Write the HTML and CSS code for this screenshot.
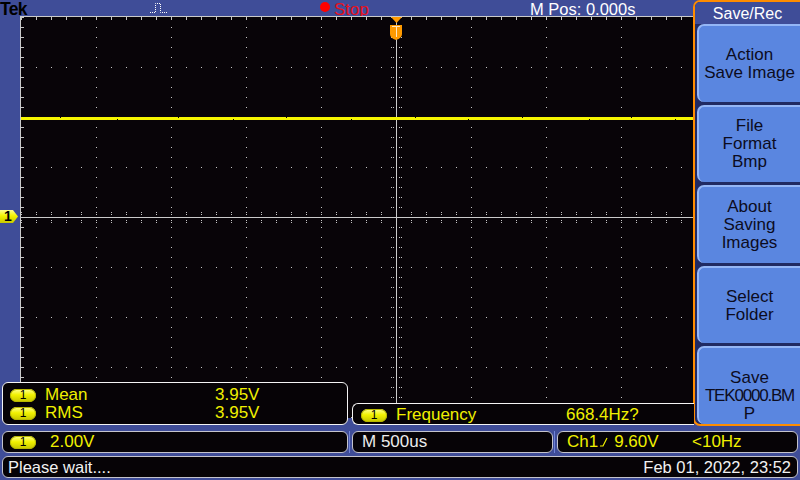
FILE: index.html
```html
<!DOCTYPE html>
<html>
<head>
<meta charset="utf-8">
<title>Tek Save/Rec</title>
<link rel="stylesheet" href="styles.css">
</head>
<body>
<div class="screen">
  <div class="main">
    <div class="topbar">
      <span class="tek">Tek</span>
      <svg class="pulse" width="19" height="11" viewBox="0 0 19 11">
        <polyline points="0,9.5 5.5,9.5 5.5,0.5 10.5,0.5 10.5,9.5 18,9.5" fill="none" stroke="#ffffff" stroke-width="1" stroke-dasharray="1 1"/>
      </svg>
      <span class="stop-dot"></span>
      <span class="stop">Stop</span>
      <span class="mpos">M Pos: 0.000s</span>
    </div>
    <div class="scope">
      <div class="layer wave">
        <div class="gutter"><div class="ch-marker">1</div></div>
        <svg class="graticule" width="673" height="402" viewBox="0 0 673 402">
          <defs>
            <pattern id="vd" x="1" y="1" width="75" height="10" patternUnits="userSpaceOnUse"><rect width="1" height="1" fill="#c4c4c4"/></pattern>
            <pattern id="hd" x="1" y="1" width="15" height="50" patternUnits="userSpaceOnUse"><rect width="1" height="1" fill="#c4c4c4"/></pattern>
            <pattern id="tt" x="1" y="1" width="15" height="400" patternUnits="userSpaceOnUse"><rect width="1" height="3" fill="#c4c4c4"/></pattern>
            <pattern id="lt" x="1" y="1" width="400" height="10" patternUnits="userSpaceOnUse"><rect width="3" height="1" fill="#c4c4c4"/></pattern>
          </defs>
          <rect width="673" height="402" fill="#080408"/>
          <rect x="1" y="1" width="672" height="401" fill="url(#vd)"/>
          <rect x="1" y="1" width="672" height="401" fill="url(#hd)"/>
          <rect x="1" y="1" width="672" height="3" fill="url(#tt)"/>
          <rect x="1" y="1" width="3" height="401" fill="url(#lt)"/>
          <g stroke="#c4c4c4" stroke-width="1">
            <line x1="371.5" y1="1" x2="371.5" y2="401" stroke-dasharray="1 9"/>
            <line x1="373.5" y1="1" x2="373.5" y2="401" stroke-dasharray="1 9"/>
            <line x1="379.5" y1="1" x2="379.5" y2="401" stroke-dasharray="1 9"/>
            <line x1="381.5" y1="1" x2="381.5" y2="401" stroke-dasharray="1 9"/>
            <line x1="1" y1="196.5" x2="673" y2="196.5" stroke-dasharray="1 14"/>
            <line x1="1" y1="198.5" x2="673" y2="198.5" stroke-dasharray="1 14"/>
            <line x1="1" y1="204.5" x2="673" y2="204.5" stroke-dasharray="1 14"/>
            <line x1="1" y1="206.5" x2="673" y2="206.5" stroke-dasharray="1 14"/>
          </g>
          <g stroke="#cacaca" stroke-width="1">
            <line x1="376.5" y1="1" x2="376.5" y2="402"/>
            <line x1="1" y1="201.5" x2="673" y2="201.5"/>
            <line x1="0.5" y1="0" x2="0.5" y2="402"/>
            <line x1="0" y1="0.5" x2="673" y2="0.5"/>
          </g>
          <rect x="1" y="101" width="672" height="3" fill="#f6f600"/>
          <g fill="#080408">
            <rect x="40" y="101" width="1" height="1"/><rect x="97" y="103" width="1" height="1"/>
            <rect x="158" y="101" width="1" height="1"/><rect x="213" y="103" width="1" height="1"/>
            <rect x="266" y="101" width="1" height="1"/><rect x="331" y="103" width="1" height="1"/>
            <rect x="395" y="101" width="1" height="1"/><rect x="448" y="103" width="1" height="1"/>
            <rect x="502" y="101" width="1" height="1"/><rect x="569" y="103" width="1" height="1"/>
            <rect x="611" y="101" width="1" height="1"/><rect x="655" y="103" width="1" height="1"/>
          </g>
          <polygon points="371,1 382,1 376.5,7" fill="#ff9a00"/>
          <path d="M370,9 H382 V18 Q382,22 376,24 Q370,22 370,18 Z" fill="#ff9a00"/>
          <path d="M372,10.5 H380 M376.5,10.5 V21" stroke="#ffe6c0" stroke-width="1" fill="none"/>
        </svg>
      </div>
      <div class="layer readouts">
        <div class="box meas">
          <div class="row"><span class="badge">1</span><span class="label">Mean</span><span class="value">3.95V</span></div>
          <div class="row"><span class="badge">1</span><span class="label">RMS</span><span class="value">3.95V</span></div>
        </div>
        <div class="box freq">
          <span class="badge">1</span><span class="label">Frequency</span><span class="value">668.4Hz?</span>
        </div>
      </div>
    </div>
  </div>

  <div class="menu">
    <div class="menu-title">Save/Rec</div>
    <div class="menu-btn"><span class="btn-label">Action<br>Save Image</span></div>
    <div class="menu-btn"><span class="btn-label">File<br>Format<br>Bmp</span></div>
    <div class="menu-btn"><span class="btn-label">About<br>Saving<br>Images</span></div>
    <div class="menu-btn"><span class="btn-label">Select<br>Folder</span></div>
    <div class="menu-btn low"><span class="btn-label">Save<br><span class="fname">TEK0000.BM</span><br>P</span></div>
  </div>

  <div class="status-row">
    <div class="box vscale"><span class="badge">1</span><span class="yel">2.00V</span></div>
    <div class="joint"></div>
    <div class="box timebase">M 500us</div>
    <div class="joint"></div>
    <div class="box trig">
      <span class="trig-main">Ch1<svg class="slope" width="8" height="10" viewBox="0 0 8 10"><polyline points="0,9 3,9 7,1" fill="none" stroke="#f0f000" stroke-width="1.2"/></svg>9.60V</span>
      <span>&lt;10Hz</span>
    </div>
  </div>

  <div class="box msg-row">
    <span>Please wait....</span>
    <span>Feb 01, 2022, 23:52</span>
  </div>
</div>
</body>
</html>
```

FILE: styles.css
```css
* { box-sizing: border-box; }

html, body {
  margin: 0;
  padding: 0;
  background: #3f4d98;
}

body {
  font-family: "Liberation Sans", Arial, sans-serif;
  width: 800px;
  height: 480px;
  overflow: hidden;
}

.screen {
  width: 800px;
  height: 480px;
  display: grid;
  grid-template-columns: 693px 107px;
  grid-template-rows: 426px auto auto;
}

/* ---------- main scope column ---------- */
.main {
  display: flex;
  flex-direction: column;
  min-width: 0;
}

.topbar {
  height: 16px;
  display: flex;
  align-items: flex-start;
  font-size: 16.5px;
  line-height: 13px;
  padding-top: 3px;
  white-space: nowrap;
}

.tek {
  width: 150px;
  flex: none;
  font-weight: bold;
  color: #000;
  font-size: 17.5px;
  letter-spacing: -0.7px;
}

.pulse {
  flex: none;
  margin-top: 0;
  display: block;
}

.stop-dot {
  flex: none;
  width: 10px;
  height: 10px;
  margin-left: 151px;
  margin-top: -1px;
  border-radius: 50%;
  background: #ff0000;
}

.stop {
  margin-left: 4px;
  color: #e8101c;
  font-size: 17px;
}

.mpos {
  margin-left: auto;
  width: 163px;
  color: #ffffff;
}

.scope {
  flex: 1;
  display: grid;
  z-index: 1;
}

.layer {
  grid-area: 1 / 1;
}

.wave {
  display: flex;
  align-items: flex-start;
}

.gutter {
  width: 20px;
  flex: none;
  padding-top: 194px;
}

.ch-marker {
  width: 18px;
  height: 13px;
  clip-path: polygon(0 0, 72% 0, 100% 50%, 72% 100%, 0 100%);
  background: linear-gradient(#ffff90, #f4f400 45%, #c8c800);
  color: #000;
  font-weight: bold;
  font-size: 14px;
  line-height: 13px;
  padding-left: 4px;
}

.graticule {
  display: block;
  flex: none;
}

.readouts {
  align-self: end;
  display: flex;
  align-items: flex-end;
  padding-bottom: 1px;
}

/* ---------- readout boxes ---------- */
.box {
  background: #060306;
  border: 1px solid #c4c4cc;
  border-radius: 6px;
  color: #f0f000;
  font-size: 17px;
  line-height: 18px;
  white-space: nowrap;
}

.badge {
  flex: none;
  width: 26px;
  height: 13px;
  border-radius: 7px;
  background: linear-gradient(#ffff9a, #f2f200 45%, #c4c400);
  box-shadow: inset 0 0 0 1px #b8b800;
  color: #000;
  font-size: 12px;
  line-height: 13px;
  text-align: center;
}

.label {
  width: 170px;
  flex: none;
}

.meas {
  margin-left: 2px;
  width: 346px;
  height: 43px;
  border-color: #f4f4f4;
  padding: 3px 0 0 7px;
}

.row {
  display: flex;
  align-items: center;
  height: 18px;
}

.row .badge {
  margin-right: 9px;
}

.freq {
  margin-left: 4px;
  width: 342px;
  height: 22px;
  border-color: #f4f4f4;
  border-right: none;
  border-radius: 6px 0 0 6px;
  display: flex;
  align-items: center;
  padding: 2px 0 0 8px;
}

.freq .badge {
  margin-right: 9px;
}

/* ---------- side menu ---------- */
.menu {
  grid-column: 2;
  grid-row: 1;
  display: flex;
  flex-direction: column;
  gap: 3px;
  border: 2px solid #ff8c00;
  border-right: none;
  border-radius: 7px 0 0 7px;
  background: #202a62;
  padding-left: 2px;
  overflow: hidden;
}

.menu-title {
  flex: none;
  height: 22px;
  margin-left: -2px;
  margin-bottom: -3px;
  background: #3f4d98;
  color: #ffffff;
  font-size: 16px;
  line-height: 21px;
  padding-top: 1px;
  text-align: center;
}

.menu-btn {
  flex: 1 1 0;
  min-height: 0;
  display: flex;
  align-items: center;
  justify-content: center;
  text-align: center;
  background: #5a86e0;
  border-top: 2px solid #94b6f6;
  border-left: 2px solid #94b6f6;
  border-radius: 7px 0 0 7px;
  color: #0c0c1e;
  font-size: 17px;
  line-height: 18px;
}

.btn-label {
  display: block;
}

.menu-btn.low .btn-label {
  margin-top: 20px;
}

.fname {
  letter-spacing: -1.2px;
}

/* ---------- bottom rows ---------- */
.status-row {
  grid-column: 1 / -1;
  display: flex;
  margin-top: 5px;
  height: 22px;
}

.status-row .box {
  height: 22px;
  display: flex;
  align-items: center;
}

.joint {
  width: 4px;
  flex: none;
  background: linear-gradient(90deg, transparent 1px, #6e82d8 1px, #6e82d8 2px, transparent 2px);
}

.vscale {
  margin-left: 2px;
  width: 346px;
  padding-left: 7px;
}

.vscale .badge {
  margin-right: 14px;
}

.timebase {
  width: 201px;
  padding-left: 9px;
  color: #ececec;
}

.trig {
  width: 241px;
  padding-left: 9px;
}

.trig-main {
  width: 125px;
  flex: none;
  display: flex;
  align-items: center;
}

.slope {
  display: block;
  margin: 0 6px 0 2px;
}

.msg-row {
  grid-column: 1 / -1;
  margin: 1px 2px 0 2px;
  height: 22px;
  display: flex;
  align-items: center;
  justify-content: space-between;
  padding: 0 6px 0 5px;
  color: #f2f2f2;
  font-size: 16.5px;
}

.yel {
  color: #f0f000;
}
```
